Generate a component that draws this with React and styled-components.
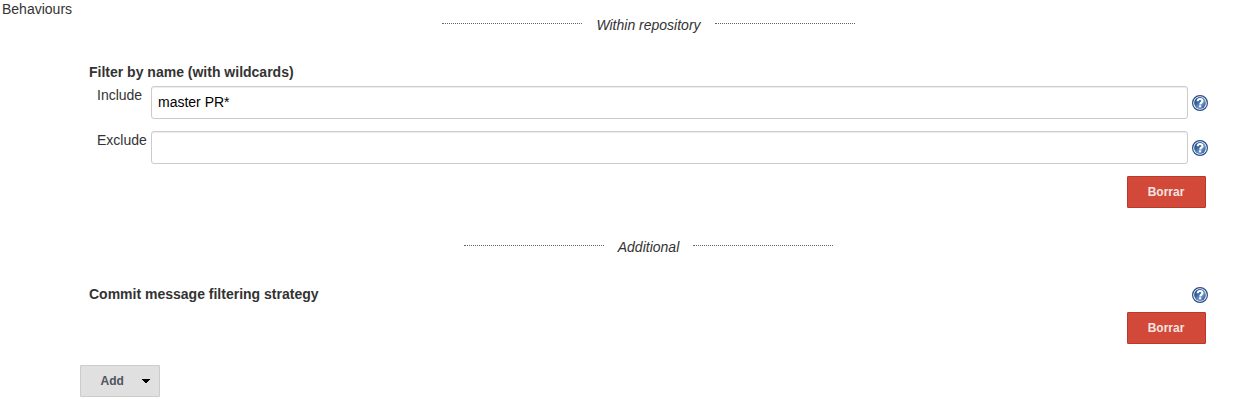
import React from "react";
import styled, { createGlobalStyle } from "styled-components";

const GlobalStyle = createGlobalStyle`
  * { box-sizing: border-box; }
  body {
    margin: 0;
    background: #fff;
    color: #333;
    font: 14px/16px "Liberation Sans", Arial, sans-serif;
  }
`;

const Page = styled.main`
  display: flex;
  height: 409px;
`;

const SideLabel = styled.div`
  width: 80px;
  flex: none;
  padding: 1px 0 0 2px;
`;

const Content = styled.div`
  width: 1137px;
  padding-top: 17px;
`;

const Divider = styled.div`
  display: flex;
  justify-content: center;
  gap: 14px;
  height: 16px;
  font-style: italic;
`;

const DottedLine = styled.span`
  width: 140px;
  height: 1px;
  margin-top: 6px;
  border-top: 1px dotted #666;
`;

const Section = styled.section`
  padding: 31px 9px ${(p) => (p.$last ? 0 : 31)}px;
`;

const SectionHead = styled.div`
  display: flex;
  justify-content: space-between;
  height: ${(p) => p.$height}px;
  font-weight: bold;
`;

const Field = styled.div`
  display: flex;
  height: 33px;
  margin-bottom: 12px;
  padding-left: 8px;
`;

const FieldLabel = styled.label`
  width: 54px;
  flex: none;
  padding-top: 1px;
`;

const TextInput = styled.input`
  width: 1037px;
  height: 33px;
  margin: 0;
  padding: 5px 6px 6px;
  border: 1px solid #ccc;
  border-radius: 3px;
  box-shadow: inset 0 1px 1px rgba(0, 0, 0, 0.075);
  background: #fff;
  color: #000;
  font: inherit;
  outline: none;
`;

const HelpButton = styled.button`
  width: 16px;
  height: 16px;
  flex: none;
  margin: ${(p) => p.$top}px 0 0 4px;
  padding: 0;
  border: 0;
  background: none;
  svg { display: block; }
`;

const Actions = styled.div`
  display: flex;
  justify-content: flex-end;
  padding-right: 2px;
`;

const Button = styled.button`
  display: flex;
  align-items: center;
  justify-content: center;
  height: 32px;
  padding: 0;
  border: 1px solid;
  border-radius: 1px;
  font: bold 12px/14px "Liberation Sans", Arial, sans-serif;
`;

const DeleteButton = styled(Button)`
  width: 79px;
  padding-right: 1px;
  border-color: #b83a2b;
  background: #d24939;
  color: #f3e4e2;
`;

const AddButton = styled(Button)`
  width: 80px;
  margin-top: 21px;
  justify-content: flex-start;
  gap: 18.5px;
  padding-left: 19.5px;
  border-color: #ccc;
  background: #e0e0e0;
  color: #4d545d;
`;

function Help({ top }) {
  return (
    <HelpButton type="button" aria-label="Help" $top={top}>
      <svg width="16" height="16" viewBox="0 0 16 16">
        <defs>
          <linearGradient id="helpFill" x1="0" y1="0" x2="1" y2="1">
            <stop offset="0" stopColor="#0f397c" />
            <stop offset="0.4" stopColor="#3f6ba6" />
            <stop offset="0.6" stopColor="#6f96c6" />
            <stop offset="1" stopColor="#1c4587" />
          </linearGradient>
        </defs>
        <circle cx="8" cy="8" r="7.4" fill="#fff" stroke="#244c88" strokeWidth="1.2" />
        <circle cx="8" cy="8" r="5.9" fill="url(#helpFill)" />
        <path d="M5.6 6.3C5.7 4.7 6.6 3.9 8 3.9C9.5 3.9 10.5 4.7 10.5 6C10.5 7.6 8.3 7.7 8.2 9.5" fill="none" stroke="#fff" strokeWidth="2" />
        <rect x="7.1" y="10.3" width="2.1" height="2.1" fill="#fff" />
      </svg>
    </HelpButton>
  );
}

function SectionDivider({ children }) {
  return (
    <Divider>
      <DottedLine />
      <span>{children}</span>
      <DottedLine />
    </Divider>
  );
}

function FilterField({ label, value }) {
  return (
    <Field>
      <FieldLabel>{label}</FieldLabel>
      <TextInput type="text" aria-label={label} defaultValue={value} />
      <Help top={9} />
    </Field>
  );
}

export default function App() {
  return (
    <>
      <GlobalStyle />
      <Page>
        <SideLabel>Behaviours</SideLabel>
        <Content>
          <SectionDivider>Within repository</SectionDivider>
          <Section>
            <SectionHead $height={22}>Filter by name (with wildcards)</SectionHead>
            <FilterField label="Include" value="master PR*" />
            <FilterField label="Exclude" value="" />
            <Actions><DeleteButton type="button">Borrar</DeleteButton></Actions>
          </Section>
          <SectionDivider>Additional</SectionDivider>
          <Section $last>
            <SectionHead $height={26}>
              Commit message filtering strategy
              <Help top={1} />
            </SectionHead>
            <Actions><DeleteButton type="button">Borrar</DeleteButton></Actions>
          </Section>
          <AddButton type="button">
            Add
            <svg width="8" height="4" viewBox="0 0 8 4" shapeRendering="crispEdges">
              <path d="M0 0H8V1H7V2H6V3H5V4H3V3H2V2H1V1H0Z" fill="#000" />
            </svg>
          </AddButton>
        </Content>
      </Page>
    </>
  );
}
